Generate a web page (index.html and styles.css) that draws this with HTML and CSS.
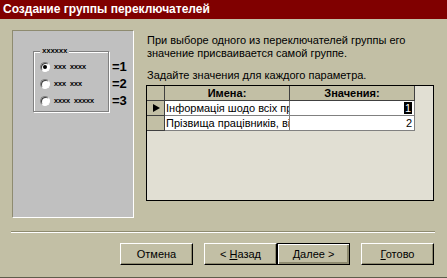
FILE: index.html
```html
<!DOCTYPE html>
<html lang="ru">
<head>
    <meta charset="UTF-8">
    <meta name="viewport" content="width=device-width, initial-scale=1.0">
    <title>Создание группы переключателей</title>
    <link rel="stylesheet" href="styles.css">
</head>
<body>

<div class="finestra">
    <div class="titolo">Создание группы переключателей</div>

    <div class="contenuto">
        <!-- anteprima del gruppo -->
        <div class="anteprima">
            <div class="gruppo">
                <span class="legenda">xxxxxx</span>
                <div class="voce"><span class="radio attivo"></span><span class="finto">xxx xxxx</span><b class="valore">=1</b></div>
                <div class="voce"><span class="radio"></span><span class="finto">xxx xxx</span><b class="valore">=2</b></div>
                <div class="voce"><span class="radio"></span><span class="finto">xxxx xxxxx</span><b class="valore">=3</b></div>
            </div>
        </div>

        <div class="destra">
            <p class="testo">При выборе одного из переключателей группы его значение присваивается самой группе.</p>
            <p class="testo secondo">Задайте значения для каждого параметра.</p>

            <div class="tabella">
                <div class="griglia">
                    <div class="cella intestazione"></div>
                    <div class="cella intestazione">Имена:</div>
                    <div class="cella intestazione">Значения:</div>

                    <div class="cella selettore"><span class="freccia"></span></div>
                    <div class="cella nome">Інформація шодо всіх працівників</div>
                    <div class="cella numero"><span class="scelto">1</span></div>

                    <div class="cella selettore"></div>
                    <div class="cella nome">Прізвища працівників, відділ</div>
                    <div class="cella numero">2</div>
                </div>
            </div>
        </div>
    </div>

    <div class="separatore"></div>

    <div class="pulsanti">
        <button>Отмена</button>
        <button class="distanza">&lt; <u>Н</u>азад</button>
        <button class="predefinito"><u>Д</u>алее &gt;</button>
        <button class="distanza"><u>Г</u>отово</button>
    </div>
</div>

</body>
</html>
```

FILE: styles.css
```css
body {
    margin: 0;
    background-color: #c2bfa5;
    font-family: "Liberation Sans", Arial, sans-serif;
    font-size: 11px;
    color: #000;
}
.finestra {
    width: 447px;
    height: 278px;
    box-sizing: border-box;
    border-bottom: 1px solid #5e5c4c;
}
.titolo {
    height: 19px;
    line-height: 19px;
    padding-left: 3px;
    background-color: #800000;
    color: #fff;
    font-weight: bold;
    font-size: 12px;
}
.contenuto {
    display: flex;
    padding: 11px 0 0 12px;
}
.anteprima {
    width: 122px;
    height: 188px;
    box-sizing: border-box;
    background-color: #c0c0c0;
    border: 1px solid;
    border-color: #8e8b70 #fff #fff #8e8b70;
    padding: 20px 0 0 20px;
}
.gruppo {
    position: relative;
    width: 76px;
    height: 61px;
    box-sizing: border-box;
    border: 1px solid #808080;
    box-shadow: 1px 1px 0 #fff, inset 1px 1px 0 #fff;
    padding: 6px 0 0 6px;
}
.legenda {
    position: absolute;
    top: -5px;
    left: 6px;
    padding: 0 2px;
    background-color: #c0c0c0;
    font-family: "Liberation Mono", monospace;
    font-size: 7.5px;
    font-weight: bold;
    line-height: 8px;
    letter-spacing: -0.3px;
}
.voce {
    display: flex;
    align-items: center;
    height: 17px;
}
.radio {
    width: 8px;
    height: 8px;
    border-radius: 50%;
    background-color: #fff;
    border: 1px solid;
    border-color: #808080 #fff #fff #808080;
    box-shadow: inset 1px 1px 0 #404040;
    display: flex;
    justify-content: center;
    align-items: center;
}
.radio.attivo::after {
    content: "";
    width: 4px;
    height: 4px;
    border-radius: 50%;
    background-color: #000;
}
.finto {
    margin-left: 4px;
    font-family: "Liberation Mono", monospace;
    font-size: 7.5px;
    font-weight: bold;
    letter-spacing: -0.5px;
    width: 56px;
}
.valore {
    position: absolute;
    left: 78px;
    font-size: 13px;
    font-family: "Liberation Sans", Arial, sans-serif;
}
.destra {
    margin-left: 12px;
    width: 288px;
}
.testo {
    margin: 0;
    padding-top: 4px;
    line-height: 13px;
    padding-left: 1px;
}
.testo.secondo {
    padding-top: 9px;
}
.tabella {
    margin-top: 3px;
    height: 116px;
    box-sizing: border-box;
    border: 1px solid #000;
    background-color: #e1dfd3;
}
.griglia {
    display: grid;
    grid-template-columns: 18px 125px 125px;
    grid-auto-rows: 15px;
}
.cella {
    box-sizing: border-box;
    border-right: 1px solid #808080;
    border-bottom: 1px solid #808080;
    line-height: 14px;
    white-space: nowrap;
    overflow: hidden;
}
.intestazione {
    background-color: #c2bfa5;
    border-color: #404040;
    text-align: center;
    font-weight: bold;
}
.selettore {
    background-color: #c2bfa5;
    border-color: #404040;
    display: flex;
    align-items: center;
    justify-content: center;
}
.freccia {
    width: 0;
    height: 0;
    border-top: 4.5px solid transparent;
    border-bottom: 4.5px solid transparent;
    border-left: 7px solid #000;
    margin-left: 1px;
}
.nome {
    background-color: #fff;
    padding-left: 1px;
}
.numero {
    background-color: #fff;
    text-align: right;
    padding-right: 2px;
}
.scelto {
    background-color: #000;
    color: #fff;
    padding: 0 1px;
}
.separatore {
    margin: 13px 12px 0 11px;
    border-top: 1px solid #8e8b70;
    border-bottom: 1px solid #fff;
}
.pulsanti {
    display: flex;
    justify-content: flex-end;
    padding: 10px 13px 0 0;
}
button {
    width: 73px;
    height: 22px;
    box-sizing: border-box;
    padding: 0;
    font-family: "Liberation Sans", Arial, sans-serif;
    font-size: 11px;
    color: #000;
    background-color: #c2bfa5;
    border: 1px solid;
    border-color: #fff #000 #000 #fff;
    box-shadow: inset -1px -1px 0 #8e8b70;
}
.distanza {
    margin-left: 11px;
}
.predefinito {
    border: 1px solid #000;
    box-shadow: inset 1px 1px 0 #fff, inset -2px -2px 0 #8e8b70;
}
```
